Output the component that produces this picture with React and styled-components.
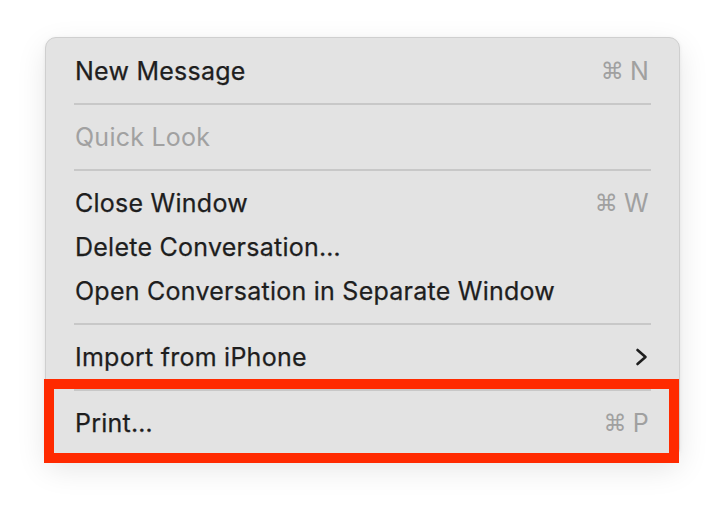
import styled, { createGlobalStyle } from 'styled-components';

const GlobalStyle = createGlobalStyle`
  html, body {
    margin: 0;
    padding: 0;
    background: #ffffff;
  }
  body {
    font-family: Inter, "Noto Sans", "Liberation Sans", sans-serif;
    -webkit-font-smoothing: antialiased;
  }
`;

const Page = styled.div`
  width: 726px;
  height: 508px;
  padding: 37px 0 0 45px;
  box-sizing: border-box;
`;

const Menu = styled.div`
  position: relative;
  width: 635px;
  box-sizing: border-box;
  padding: 12px 28px 12px 28px;
  background: #e3e3e3;
  border: 1px solid #cfcfcf;
  border-radius: 11px;
  box-shadow: 0 10px 30px rgba(0, 0, 0, 0.1), 0 1px 4px rgba(0, 0, 0, 0.06);
`;

const Item = styled.div`
  display: flex;
  align-items: center;
  justify-content: space-between;
  height: 44px;
  box-sizing: border-box;
  padding: 0 2px 3px 1px;
  font-size: 25px;
  letter-spacing: 0.25px;
  color: ${(props) => (props.disabled ? '#a1a1a1' : '#1e1e1e')};
  -webkit-text-stroke: ${(props) => (props.disabled ? '0' : '0.25px')};
`;

const Shortcut = styled.span`
  display: flex;
  align-items: center;
  gap: 6px;
  color: #a0a0a0;
  font-size: 25px;
  -webkit-text-stroke: 0;
`;

const CmdKey = styled.span`
  font-family: "DejaVu Sans", sans-serif;
  font-size: 23px;
`;

const Separator = styled.div`
  height: 2px;
  margin: 9px 0 11px;
  background: #c8c8c8;
`;

const Highlight = styled.div`
  position: absolute;
  left: -2px;
  top: 341px;
  width: 635px;
  height: 84px;
  box-sizing: border-box;
  border: 10px solid #ff2a00;
  pointer-events: none;
`;

const Chevron = () => (
  <svg width="14" height="18" viewBox="0 0 14 18" fill="none">
    <polyline
      points="2.5,2 10.5,9 2.5,16"
      stroke="#1e1e1e"
      strokeWidth="2.6"
      strokeLinecap="round"
      strokeLinejoin="round"
    />
  </svg>
);

const Key = ({ letter }) => (
  <Shortcut>
    <CmdKey>⌘</CmdKey>
    {letter}
  </Shortcut>
);

export default function App() {
  return (
    <Page>
      <GlobalStyle />
      <Menu>
        <Item>
          New Message
          <Key letter="N" />
        </Item>
        <Separator />
        <Item disabled>Quick Look</Item>
        <Separator />
        <Item>
          Close Window
          <Key letter="W" />
        </Item>
        <Item>Delete Conversation…</Item>
        <Item>Open Conversation in Separate Window</Item>
        <Separator />
        <Item>
          Import from iPhone
          <Chevron />
        </Item>
        <Separator />
        <Item>
          Print…
          <Key letter="P" />
        </Item>
        <Highlight />
      </Menu>
    </Page>
  );
}
